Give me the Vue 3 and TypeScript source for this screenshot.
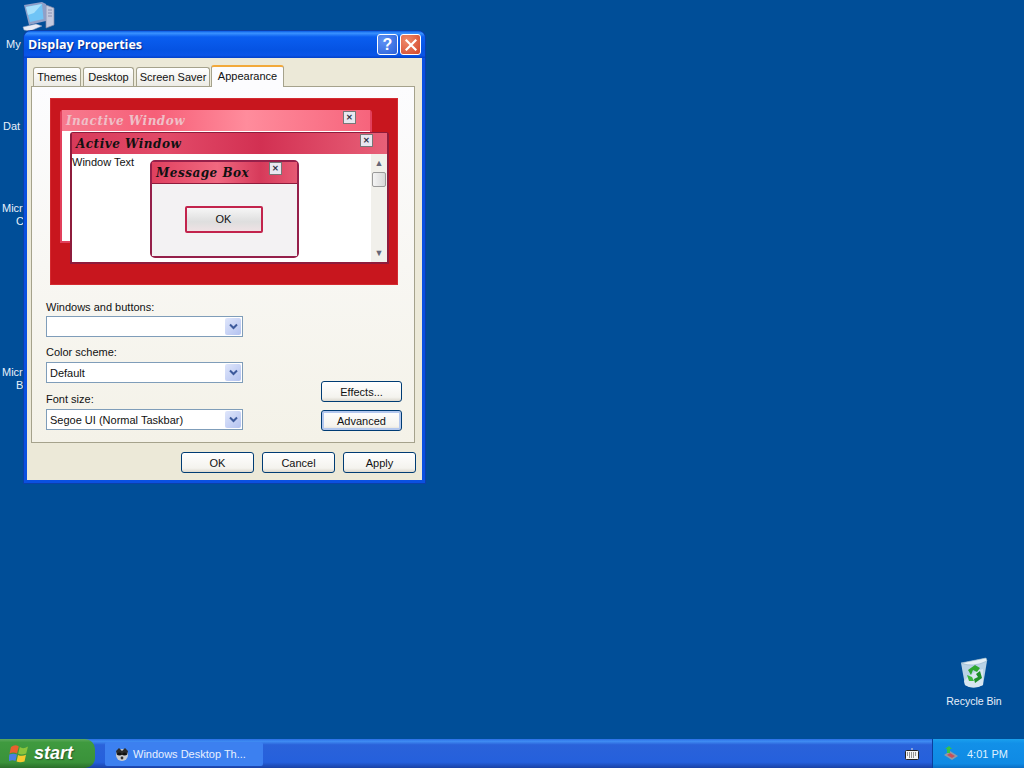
<script setup lang="ts">
// only the part of each label that sticks out left of the dialog is visible
const desktopLabels = [
  { top: 38, left: 6, text: 'My' },
  { top: 120, left: 3, text: 'Dat' },
  { top: 202, left: 2, text: 'Micr' },
  { top: 215, left: 16, text: 'C' },
  { top: 366, left: 2, text: 'Micr' },
  { top: 379, left: 16, text: 'B' },
]
const tabs = ['Themes', 'Desktop', 'Screen Saver', 'Appearance']
const fields = [
  { label: 'Windows and buttons:', value: '' },
  { label: 'Color scheme:', value: 'Default' },
  { label: 'Font size:', value: 'Segoe UI (Normal Taskbar)' },
]
</script>

<template>
  <div class="screen">
    <main class="desktop">
      <svg class="computer" viewBox="0 0 34 30" width="34" height="30">
        <path d="M24 4 L32 7 L32 24 L24 27 Z" fill="#c3c9de" stroke="#7f86a8" stroke-width="0.7" />
        <path d="M26 9h4M26 12h4M26 15h4" stroke="#8a90b0" stroke-width="1" />
        <path d="M2 4 L20 1 L24 3 L24 20 L7 24 Z" fill="#8fa0c8" />
        <path d="M4 6 L20 3 L21.5 18 L8 21 Z" fill="#6fc4f6" />
        <path d="M4 6 L20 3 L12 12 L6 14 Z" fill="#a8e0fb" />
        <path d="M1 26 L14 23 L20 25 L8 30 L2 29 Z" fill="#e8ecf6" stroke="#97a0c0" stroke-width="0.5" />
      </svg>

      <div
        v-for="item in desktopLabels"
        :key="item.top"
        class="desk-label"
        :style="{ top: item.top + 'px', left: item.left + 'px' }"
      >{{ item.text }}</div>

      <section class="dialog">
        <header class="titlebar">
          <span class="title">Display Properties</span>
          <button class="cap cap-help">?</button>
          <button class="cap cap-close">
            <svg viewBox="0 0 12 12" width="12" height="12">
              <path d="M1.5 1.5 L10.5 10.5 M10.5 1.5 L1.5 10.5" stroke="#fff" stroke-width="2.2" stroke-linecap="square" />
            </svg>
          </button>
        </header>

        <div class="dialog-body">
          <nav class="tabs">
            <div
              v-for="tab in tabs"
              :key="tab"
              class="tab"
              :class="{ active: tab === 'Appearance' }"
            >{{ tab }}</div>
          </nav>

          <div class="panel">
            <div class="preview">
              <div class="win win-inactive">
                <div class="win-title">
                  <span>Inactive Window</span>
                  <i class="mini-x">✕</i>
                </div>
                <div class="win-body"></div>
              </div>

              <div class="win win-active">
                <div class="win-title">
                  <span>Active Window</span>
                  <i class="mini-x">✕</i>
                </div>
                <div class="win-body">
                  <span class="win-text">Window Text</span>
                  <div class="scrollbar">
                    <span class="arrow">▲</span>
                    <span class="thumb"></span>
                    <span class="arrow arrow-down">▼</span>
                  </div>
                </div>
              </div>

              <div class="win win-msg">
                <div class="win-title">
                  <span>Message Box</span>
                  <i class="mini-x">✕</i>
                </div>
                <div class="msg-body">
                  <button class="msg-ok">OK</button>
                </div>
              </div>
            </div>

            <div class="form">
              <div class="fields">
                <div v-for="f in fields" :key="f.label" class="field">
                  <label>{{ f.label }}</label>
                  <div class="select">
                    <span>{{ f.value }}</span>
                    <span class="drop">
                      <svg viewBox="0 0 9 7" width="9" height="7">
                        <path d="M1 1.5 L4.5 5 L8 1.5" fill="none" stroke="#3d5a9c" stroke-width="2" />
                      </svg>
                    </span>
                  </div>
                </div>
              </div>
              <div class="side-btns">
                <button class="btn">Effects...</button>
                <button class="btn default">Advanced</button>
              </div>
            </div>
          </div>

          <footer class="footer">
            <button class="btn wide">OK</button>
            <button class="btn wide">Cancel</button>
            <button class="btn wide">Apply</button>
          </footer>
        </div>
      </section>

      <div class="recycle">
        <svg viewBox="0 0 30 32" width="30" height="32">
          <path d="M2 6 L27 1 L28 4 L24 28 Q14 33 6 28 Z" fill="#b9d3e6" />
          <path d="M2 6 L27 1 L28 4 Q14 11 2 6 Z" fill="#e6f0f6" stroke="#8fb0c8" stroke-width="0.6" />
          <path d="M5 24 Q14 14 24 12 L24 28 Q14 33 6 28 Z" fill="#d8e6f0" />
          <path d="M9 13 L16 8 L21 11 L18 15 L14 13 L12 18 Z" fill="#2fa82f" />
          <path d="M21 14 L23 21 L16 26 L15 22 L19 20 L17 17 Z" fill="#1e8f2a" />
          <path d="M8 18 L13 20 L15 24 L10 24 Z" fill="#3cb93c" />
        </svg>
        <span>Recycle Bin</span>
      </div>
    </main>

    <footer class="taskbar">
      <button class="start">
        <svg viewBox="0 0 20 20" width="20" height="20">
          <path d="M2 3 Q6 0 9.8 2.5 L8 9.5 Q4.5 7.5 0.5 9.5 Z" fill="#e8602e" />
          <path d="M10.8 3 Q14 5.5 19 2.5 L17.2 9.5 Q13 11.5 9.2 9.8 Z" fill="#8ac43c" />
          <path d="M0.3 10.5 Q4.5 8.8 8 10.5 L6.5 17 Q3 15.5 -0.5 17.5 Z" fill="#4a7fe0" />
          <path d="M9 11 Q13 12.8 17 10.8 L15.5 17.5 Q11 19 7.6 17.5 Z" fill="#f6c92e" />
        </svg>
        <span>start</span>
      </button>
      <div class="task">
        <svg viewBox="0 0 16 16" width="16" height="16">
          <circle cx="8" cy="9" r="6" fill="#c9ccd2" />
          <path d="M2 5 L5 2 L8 5 L11 2 L14 5 L13 9 L3 9 Z" fill="#2b2b2b" />
          <ellipse cx="5.5" cy="8" rx="2.2" ry="1.6" fill="#111" />
          <ellipse cx="10.5" cy="8" rx="2.2" ry="1.6" fill="#111" />
          <circle cx="8" cy="12" r="1.4" fill="#333" />
        </svg>
        <span>Windows Desktop Th...</span>
      </div>
      <div class="spacer"></div>
      <svg class="kbd" viewBox="0 0 14 12" width="14" height="12">
        <rect x="0.5" y="2.5" width="13" height="9" rx="1" fill="#f4f4f4" stroke="#222" />
        <path d="M2 5h10M2 7h10M4 9h6" stroke="#333" stroke-dasharray="1 1" />
        <path d="M7 0v2" stroke="#ddd" />
      </svg>
      <div class="tray">
        <svg viewBox="0 0 16 16" width="16" height="16">
          <path d="M1 9 L9 14 L15 10 L7 5 Z" fill="#8e9aa8" />
          <path d="M4 9 L9 12 L12 10 L7 7 Z" fill="#c8505a" />
          <path d="M2 3 L6 0 L9 3 L7 3 L7 7 L4 7 L4 3 Z" fill="#35c24a" />
        </svg>
        <span>4:01 PM</span>
      </div>
    </footer>
  </div>
</template>

<style scoped>
.screen{width:1024px;height:768px;display:flex;flex-direction:column;overflow:hidden;font-family:"Liberation Sans",Arial,sans-serif;font-size:11px;color:#111}
.desktop{flex:1;position:relative;background:#004e98}
.computer{position:absolute;left:22px;top:1px}
.desk-label{position:absolute;white-space:nowrap;color:#e8f0fa;font-size:11px;line-height:13px}

.dialog{position:absolute;left:24px;top:31px;width:401px;height:452px;display:flex;flex-direction:column;box-sizing:border-box;border-radius:7px 7px 0 0;background:#0a50e0;box-shadow:0 0 0 1px #0b3fa8}
.titlebar{height:27px;flex:none;display:flex;align-items:center;gap:2px;padding:0 4px 0 4px;border-radius:7px 7px 0 0;background:linear-gradient(180deg,#0a5ce6 0,#3a93ff 8%,#0a5ef0 22%,#0553e3 70%,#0a55e8 90%,#0340c8 100%)}
.title{flex:1;color:#fff;font-family:"Open Sans",sans-serif;font-weight:700;font-size:12.5px;text-shadow:1px 1px 1px #0a2a8a}
.cap{width:21px;height:21px;padding:0;border:1px solid #fff;border-radius:3px;display:flex;align-items:center;justify-content:center;color:#fff;font:700 16px "Liberation Sans",sans-serif}
.cap-help{background:radial-gradient(circle at 30% 30%,#5f93f5,#2a5fd8)}
.cap-close{background:radial-gradient(circle at 30% 30%,#ee8a6c,#d4472a)}
.dialog-body{flex:1;margin:0 3px 3px;background:#ece9d8;padding:7px 7px 0 4px;display:flex;flex-direction:column}
.tabs{display:flex;height:21px;padding-left:2px;gap:2px;align-items:flex-end}
.tab{height:19px;line-height:18px;text-align:center;background:linear-gradient(180deg,#fff,#ecebe5);border:1px solid #a5a28c;border-bottom:none;border-radius:3px 3px 0 0;box-sizing:border-box;white-space:nowrap}
.tab:nth-child(1){width:48px}
.tab:nth-child(2){width:51px}
.tab:nth-child(3){width:74px}
.tab.active{width:73px;height:22px;line-height:18px;margin-left:-1px;margin-bottom:-1px;background:#fcfcfe;border-top:2px solid #f2a93b;position:relative;z-index:1}
.panel{height:357px;box-sizing:border-box;border:1px solid #a5a28c;background:linear-gradient(180deg,#fcfcfe,#f4f2e8);padding:11px 12px 0 14px}
.preview{position:relative;width:348px;height:187px;margin-left:4px;background:#c8161e;box-shadow:inset 0 0 0 1px #d42a30}
.win{position:absolute;box-sizing:border-box;border-radius:3px 3px 0 0;display:flex;flex-direction:column}
.win-title{display:flex;align-items:center;justify-content:space-between;flex:none;padding:0 14px 0 4px;font-family:"DejaVu Serif",serif;font-style:italic;font-weight:700;font-size:12px;letter-spacing:.5px}
.win-title span{padding-top:1px}
.mini-x{width:11px;height:11px;align-self:flex-start;margin-top:1px;font:700 8px/11px "Liberation Sans",sans-serif;text-align:center;background:#e8e8f0;border:1px solid #777;color:#334}
.win-inactive{left:10px;top:12px;width:312px;height:133px;background:#f8697f;border:2px solid #e2405c;border-top:none}
.win-inactive .win-title{height:21px;color:#efc0c8;background:linear-gradient(90deg,#f77a8e,#f65f78 30%,#ff8c9c 60%,#f6647c)}
.win-body{flex:1;background:#fff;position:relative;display:flex}
.win-active{left:20px;top:34px;width:319px;height:132px;background:#a0203f;border:2px solid #8e1c3c;border-top:1px solid #8e1c3c}
.win-active .win-title{height:21px;color:#111;background:linear-gradient(90deg,#d83a5a,#e24a68 30%,#d23052 60%,#e86078)}
.win-text{padding:1px 0 0 0;height:14px;line-height:14px;color:#111;flex:1;font-size:11px}
.scrollbar{width:16px;display:flex;flex-direction:column;align-items:center;background:#f1f0eb}
.arrow{color:#667;font-size:9px;height:18px;line-height:18px}
.arrow-down{margin-top:auto}
.thumb{width:14px;height:15px;box-sizing:border-box;border:1px solid #9a9a9a;border-radius:2px;background:linear-gradient(90deg,#f4f4f4,#d8d8d8)}
.win-msg{left:100px;top:62px;width:149px;height:98px;border:2px solid #95204a;border-radius:5px;background:#f0f0f0}
.win-msg .win-title{height:21px;color:#111;padding-right:15px;border-bottom:1px solid #8e1c3c;background:linear-gradient(90deg,#e0405f,#f06880 45%,#d63a5a 75%,#e65a74)}
.win-msg .mini-x{margin-top:0}
.msg-body{flex:1;display:flex;align-items:center;justify-content:center;padding:0 2px 2px 0;background:#f3f2f3}
.msg-ok{width:78px;height:27px;border:2px solid #c2244c;border-radius:2px;background:linear-gradient(180deg,#f6f6f6,#dedede 60%,#efe2e4);font:11px "Liberation Sans",sans-serif;color:#111}
.form{display:flex;justify-content:space-between;align-items:flex-end;margin-top:14px}
.fields{width:197px;display:flex;flex-direction:column}
.field{margin-top:8px}
.field:first-child{margin-top:0}
.field:last-child{margin-top:9px}
.field label{display:block;height:17px;line-height:16px}
.field + .field label{line-height:14px}
.select{height:21px;box-sizing:border-box;border:1px solid #7f9db9;background:#fff;display:flex;align-items:center;justify-content:space-between;padding:1px 1px 1px 3px}
.drop{width:16px;height:17px;display:flex;align-items:center;justify-content:center;background:linear-gradient(135deg,#dfe6fb,#b3c2f0);border-radius:2px}
.side-btns{display:flex;flex-direction:column;gap:8px;margin-bottom:-1px}
.btn{width:81px;height:21px;padding:0;border:1px solid #003c74;border-radius:3px;background:linear-gradient(180deg,#fff 0,#f4f3ee 80%,#dcd8ce 100%);font:11px "Liberation Sans",sans-serif;color:#111}
.btn.default{box-shadow:inset 0 0 0 2px #b4c8ee}
.btn.wide{width:73px}
.footer{display:flex;justify-content:flex-end;gap:8px;padding-top:9px;margin-right:-1px}

.recycle{position:absolute;left:934px;top:657px;width:80px;display:flex;flex-direction:column;align-items:center;gap:5px;color:#e8f0fa;font-size:10.5px;line-height:14px}

.taskbar{height:29px;flex:none;display:flex;align-items:center;background:linear-gradient(180deg,#2a6fe6 0,#3f8cf3 8%,#2a62da 20%,#2560dc 80%,#1941a5 100%)}
.start{width:95px;height:29px;padding:0 0 0 9px;border:none;border-radius:0 10px 10px 0;display:flex;align-items:center;gap:5px;color:#fff;font:italic 700 18px "Liberation Sans",sans-serif;text-shadow:1px 1px 1px #2a5a2a;background:linear-gradient(180deg,#5ca85c 0,#3f9a3f 12%,#3a923a 80%,#2a6e2a 100%)}
.task{margin-left:10px;width:158px;height:24px;box-sizing:border-box;padding-left:9px;display:flex;align-items:center;gap:3px;color:#e8f0ff;background:#3c80f0;border-radius:2px;font-size:11px}
.spacer{flex:1}
.kbd{margin-right:13px}
.tray{width:92px;height:29px;box-sizing:border-box;border-left:1px solid #0a3f9e;padding-left:10px;display:flex;align-items:center;gap:8px;color:#dff0ff;font-size:11px;background:linear-gradient(180deg,#1aa0ee 0,#1290e8 15%,#0f8ae4 85%,#0a6ec4 100%)}
</style>

<style>
html,body{margin:0;padding:0;background:#004e98}
</style>
